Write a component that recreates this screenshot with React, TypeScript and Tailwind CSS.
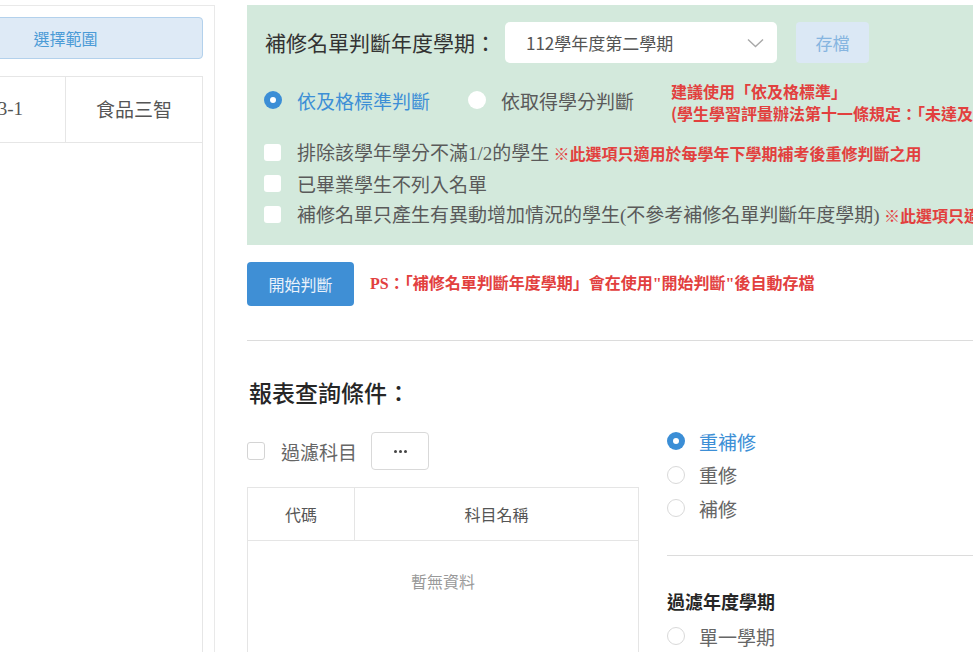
import React from "react";

const RED = "text-[#e2403e]";

function Radio({ checked, bordered = true }: { checked?: boolean; bordered?: boolean }) {
  if (checked) {
    return (
      <span className="w-[18px] h-[18px] shrink-0 rounded-full bg-[#3b8ed6] flex items-center justify-center">
        <span className="w-[6px] h-[6px] rounded-full bg-white" />
      </span>
    );
  }
  return (
    <span
      className={
        bordered
          ? "w-[18px] h-[18px] shrink-0 rounded-full bg-white border border-[#d9d9d9]"
          : "w-[18px] h-[18px] shrink-0 rounded-full bg-white"
      }
    />
  );
}

function GreenCheck({ children }: { children: React.ReactNode }) {
  return (
    <div className="flex items-center h-[31px] whitespace-nowrap">
      <span className="w-[17px] h-[17px] shrink-0 rounded-[3px] bg-white" />
      <span className="ml-[16px] text-[19px] text-[#5a5a5a] leading-none">{children}</span>
    </div>
  );
}

export default function App() {
  return (
    <div className="flex w-[973px] h-[652px] overflow-hidden bg-white font-['Noto_Sans_CJK_TC',sans-serif]">
      {/* left panel */}
      <aside className="w-[215px] shrink-0 mt-[5px] border-t border-r border-[#e9e9e9] overflow-hidden flex flex-col">
        <div className="ml-[-72px] w-[275px] flex flex-col flex-1">
          <button className="shrink-0 mt-[11px] h-[42px] rounded-[4px] border border-[#b3d1ec] bg-[#deeaf6] text-[#4b9bd6] text-[16px]">
            選擇範圍
          </button>
          <div className="mt-[17px] flex-1 border-t border-r border-l border-[#e6e6e6]">
            <div className="flex h-[66px] border-b border-[#e6e6e6]">
              <div className="w-[137px] border-r border-[#e6e6e6] flex items-center justify-end pr-[42px] text-[19px] text-[#555] font-['Liberation_Serif',serif]">
                113-1
              </div>
              <div className="flex-1 flex items-center justify-center text-[19px] text-[#555]">食品三智</div>
            </div>
          </div>
        </div>
      </aside>

      {/* main */}
      <main className="ml-[32px] w-[780px] shrink-0 flex flex-col">
        <section className="shrink-0 mt-[5px] h-[240px] bg-[#d3e9dc] pl-[17px] pt-[17px]">
          <div className="flex items-center h-[41px] whitespace-nowrap">
            <span className="text-[21px] text-[#333] leading-none ml-[1px]">補修名單判斷年度學期：</span>
            <div className="ml-[9px] w-[272px] h-[41px] rounded-[5px] bg-white flex items-center justify-between pl-[21px] pr-[13px]">
              <span className="text-[17px] text-[#555] leading-none">112學年度第二學期</span>
              <svg width="17" height="10" viewBox="0 0 17 10" fill="none">
                <path d="M1 1.5 L8.5 8.5 L16 1.5" stroke="#a8a8a8" strokeWidth="1.4" />
              </svg>
            </div>
            <button className="ml-[19px] w-[73px] h-[41px] rounded-[4px] bg-[#dbe8f5] text-[#86b5e0] text-[17px]">
              存檔
            </button>
          </div>

          <div className="mt-[17px] flex items-start whitespace-nowrap">
            <div className="mt-[9px] flex items-center h-[22px]">
              <Radio checked />
              <span className="ml-[15px] text-[19px] text-[#3d8fd6] leading-none">依及格標準判斷</span>
            </div>
            <div className="ml-[38px] mt-[9px] flex items-center h-[22px]">
              <Radio bordered={false} />
              <span className="ml-[15px] text-[19px] text-[#5a5a5a] leading-none">依取得學分判斷</span>
            </div>
            <div className={`ml-[37px] text-[16px] leading-[22px] font-semibold ${RED}`}>
              <div>建議使用「依及格標準」</div>
              <div>(學生學習評量辦法第十一條規定：「未達及格標準之科目，應重修或補修」)</div>
            </div>
          </div>

          <div className="mt-[13px]">
            <GreenCheck>
              排除該學年學分不滿<span className="font-['Liberation_Serif',serif]">1/2</span>的學生{" "}
              <span className={`text-[16px] font-semibold ${RED}`}>※此選項只適用於每學年下學期補考後重修判斷之用</span>
            </GreenCheck>
            <GreenCheck>已畢業學生不列入名單</GreenCheck>
            <GreenCheck>
              補修名單只產生有異動增加情況的學生<span className="font-['Liberation_Serif',serif]">(</span>不參考補修名單判斷年度學期
              <span className="font-['Liberation_Serif',serif]">)</span>{" "}
              <span className={`text-[16px] font-semibold ${RED}`}>※此選項只適用於每學年下學期</span>
            </GreenCheck>
          </div>
        </section>

        <div className="shrink-0 mt-[17px] flex items-center whitespace-nowrap">
          <button className="w-[107px] h-[44px] rounded-[4px] bg-[#3f8fd5] text-[16px] text-[#eaf2fb]">開始判斷</button>
          <span className={`ml-[16px] text-[16px] font-bold ${RED} font-['Liberation_Serif','Noto_Sans_CJK_TC',serif]`}>
            PS：「補修名單判斷年度學期」會在使用"開始判斷"後自動存檔
          </span>
        </div>

        <div className="shrink-0 mt-[34px] border-t border-[#dcdcdc]" />

        <h2 className="shrink-0 mt-[35px] ml-[2px] text-[23px] leading-[32px] font-medium text-[#262626]">報表查詢條件：</h2>

        <div className="shrink-0 mt-[16px] flex items-start">
          {/* left column */}
          <div className="w-[392px] shrink-0 pt-[8px]">
            <div className="flex items-center h-[38px]">
              <span className="w-[18px] h-[18px] rounded-[3px] border border-[#d4d4d4] bg-white" />
              <span className="ml-[16px] text-[19px] text-[#666] leading-none">過濾科目</span>
              <button className="ml-[14px] w-[58px] h-[38px] rounded-[4px] border border-[#d9d9d9] bg-white flex items-center justify-center gap-[2px]">
                <span className="w-[3px] h-[3px] rounded-full bg-[#444]" />
                <span className="w-[3px] h-[3px] rounded-full bg-[#444]" />
                <span className="w-[3px] h-[3px] rounded-full bg-[#444]" />
              </button>
            </div>
            <div className="mt-[17px] border border-[#e5e5e5] h-[200px]">
              <div className="flex h-[53px] border-b border-[#e5e5e5] text-[16px] text-[#555]">
                <div className="w-[107px] border-r border-[#e5e5e5] flex items-center justify-center">代碼</div>
                <div className="flex-1 flex items-center justify-center">科目名稱</div>
              </div>
              <div className="pt-[29px] text-center text-[16px] leading-[22px] text-[#999]">暫無資料</div>
            </div>
          </div>

          {/* right column */}
          <div className="ml-[28px] flex-1">
            <div className="flex items-center h-[34px]">
              <Radio checked />
              <span className="ml-[14px] text-[19px] text-[#3d8fd6] leading-none">重補修</span>
            </div>
            <div className="flex items-center h-[33px]">
              <Radio />
              <span className="ml-[14px] text-[19px] text-[#666] leading-none">重修</span>
            </div>
            <div className="flex items-center h-[34px]">
              <Radio />
              <span className="ml-[14px] text-[19px] text-[#666] leading-none">補修</span>
            </div>
            <div className="mt-[30px] border-t border-[#dcdcdc]" />
            <div className="mt-[33px] text-[18px] leading-[24px] font-bold text-[#262626]">過濾年度學期</div>
            <div className="mt-[6px] flex items-center h-[34px]">
              <Radio />
              <span className="ml-[14px] text-[19px] text-[#666] leading-none">單一學期</span>
            </div>
          </div>
        </div>
      </main>
    </div>
  );
}
